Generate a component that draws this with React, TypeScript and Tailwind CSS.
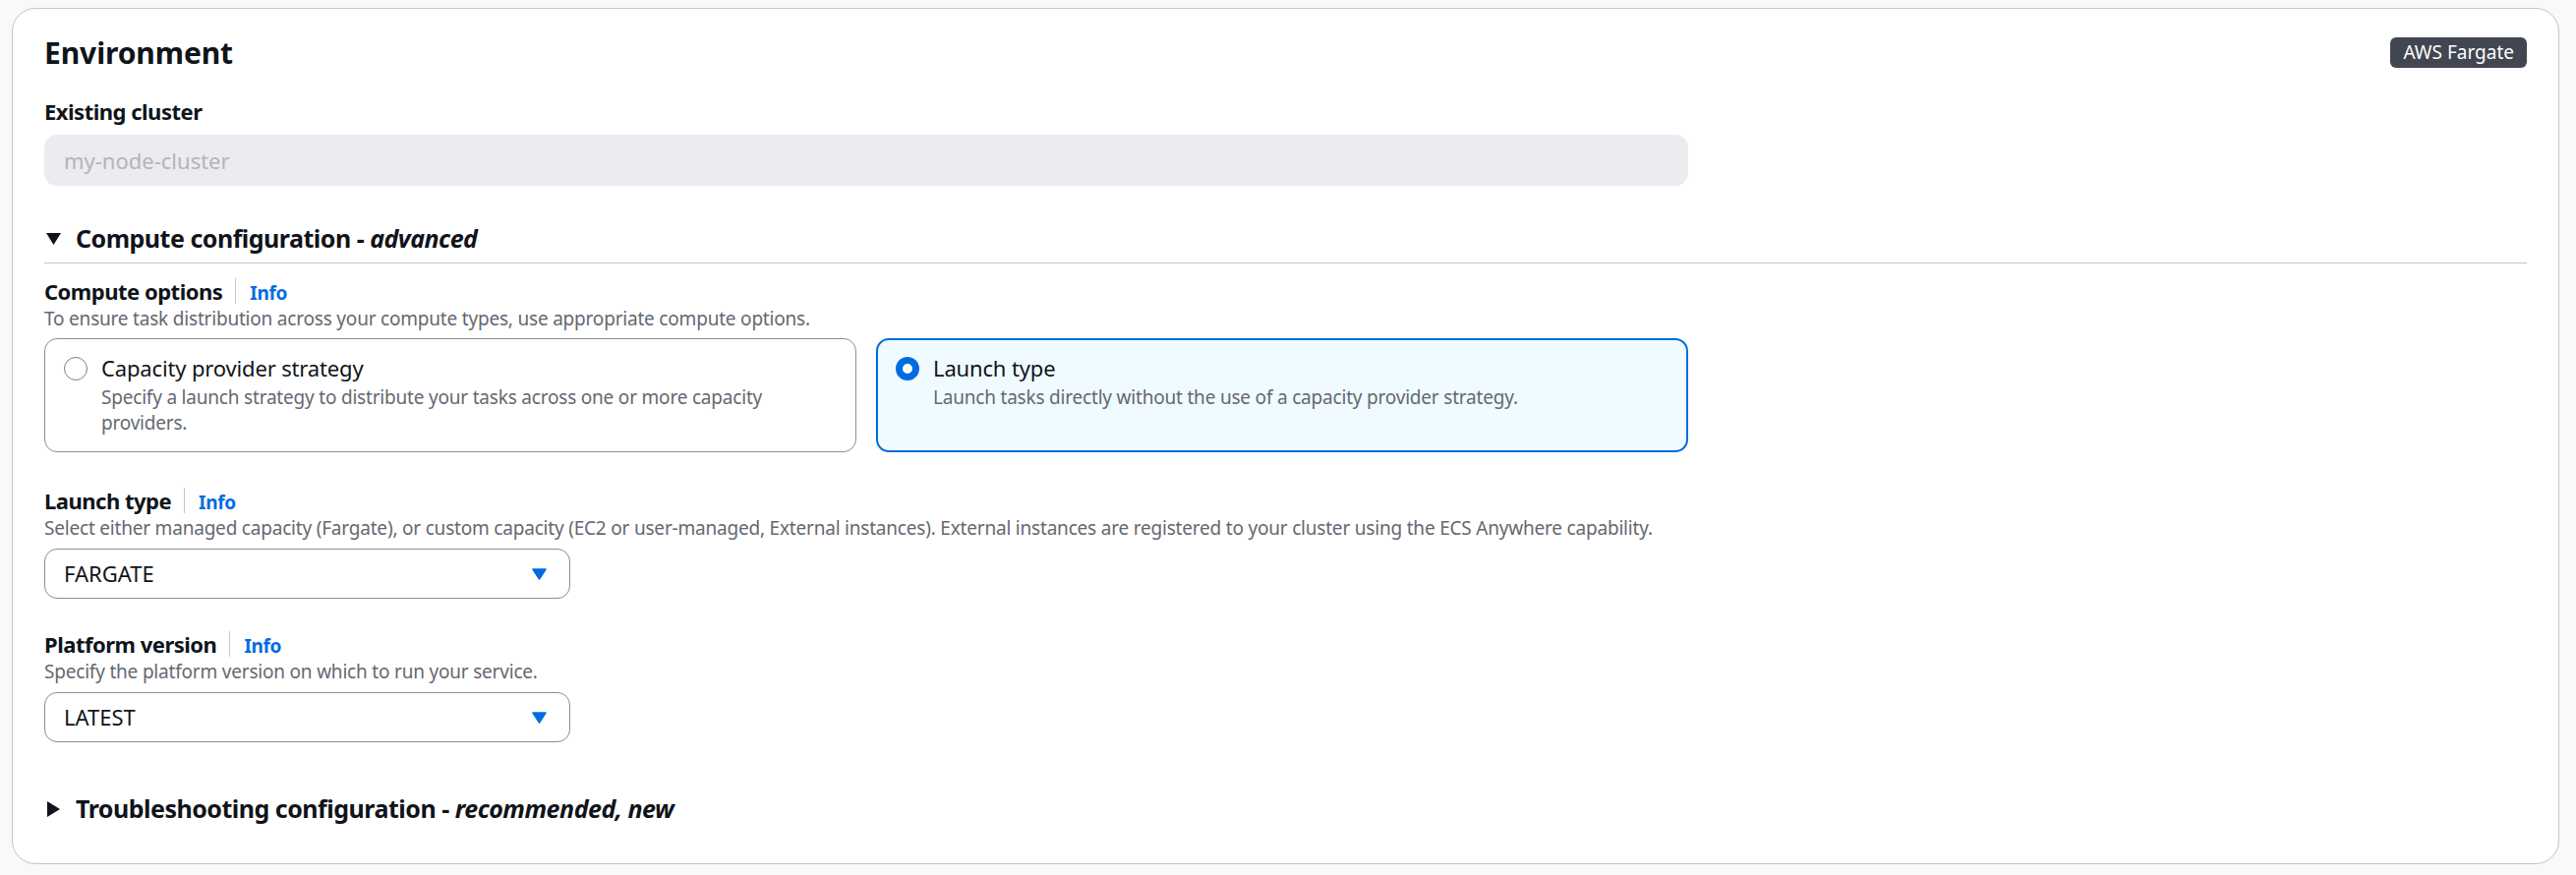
export default function App() {
  const Info = () => (
    <>
      <span className="self-center ml-[13px] h-[26px] w-px bg-[#c6c6cd]" />
      <span className="ml-[14px] text-[19px] tracking-[-0.3px] font-bold text-[#006ce0]">Info</span>
    </>
  );
  const Arrow = () => (
    <svg width="15" height="12" viewBox="0 0 15 12">
      <path d="M1 1 L14 1 L7.5 11 Z" fill="#006ce0" stroke="#006ce0" strokeWidth="1.5" strokeLinejoin="round" />
    </svg>
  );
  const label = "text-[22px] tracking-[-0.5px] font-bold";
  const desc = "text-[19px] tracking-[-0.2px] leading-[27px] text-[#656871]";
  return (
    <div className="min-h-[890px] bg-[#f9f9fa] pt-[8px] pl-[12px] font-['Noto_Sans',sans-serif] text-[#0f141a]">
      <div className="w-[2591px] h-[871px] box-border rounded-[24px] border border-[#c6c6cd] bg-white px-[32px] pt-[27px]">
        <div className="flex justify-between items-start">
          <h2 className="text-[30px] leading-[36px] font-bold tracking-[-0.1px]">Environment</h2>
          <span className="mt-[2px] h-[31px] px-[13px] rounded-[6px] bg-[#424650] text-white text-[19px] leading-[31px]">
            AWS Fargate
          </span>
        </div>

        <div className={`mt-[25px] leading-[33px] ${label}`}>Existing cluster</div>
        <div className="mt-[7px] w-[1672px] h-[52px] rounded-[13px] bg-[#ebebf0] flex items-center px-[20px] text-[22px] leading-[33px] text-[#b4b4bb]">
          my-node-cluster
        </div>

        <div className="mt-[37px] pb-[8px] border-b border-[#c6c6cd]">
          <div className="flex items-center h-[33px]">
            <svg width="15" height="12" viewBox="0 0 15 12" className="ml-[2px] mr-[15px]">
              <path d="M0 0 L15 0 L7.5 12 Z" fill="#0f141a" />
            </svg>
            <span className="text-[25px] tracking-[-0.5px] font-bold leading-[33px]">
              Compute configuration - <i>advanced</i>
            </span>
          </div>
        </div>

        <div className="mt-[13px] flex items-baseline h-[30px] leading-[30px]">
          <span className={label}>Compute options</span>
          <Info />
        </div>
        <div className={desc}>
          To ensure task distribution across your compute types, use appropriate compute options.
        </div>

        <div className="mt-[6px] w-[1672px] grid grid-cols-2 gap-[20px]">
          <div className="h-[116px] box-border rounded-[13px] border border-[#8c8c94] pl-[19px] pt-[13px] pr-[20px] flex gap-[14px]">
            <div className="h-[33px] flex items-center shrink-0">
              <span className="w-[24px] h-[24px] rounded-full border-[1.5px] border-[#7d7d85] bg-white box-border" />
            </div>
            <div>
              <div className="text-[22px] tracking-[-0.15px] leading-[33px]">Capacity provider strategy</div>
              <div className="text-[19px] tracking-[-0.2px] leading-[26px] text-[#656871]">
                Specify a launch strategy to distribute your tasks across one or more capacity providers.
              </div>
            </div>
          </div>
          <div className="h-[116px] box-border rounded-[13px] border-2 border-[#006ce0] bg-[#f0fbff] pl-[18px] pt-[12px] pr-[20px] flex gap-[14px]">
            <div className="h-[33px] flex items-center shrink-0">
              <span className="w-[24px] h-[24px] rounded-full border-[7px] border-[#006ce0] bg-white box-border" />
            </div>
            <div>
              <div className="text-[22px] tracking-[-0.15px] leading-[33px]">Launch type</div>
              <div className="text-[19px] tracking-[-0.2px] leading-[26px] text-[#656871]">
                Launch tasks directly without the use of a capacity provider strategy.
              </div>
            </div>
          </div>
        </div>

        <div className="mt-[34px] flex items-baseline h-[30px] leading-[30px]">
          <span className={label}>Launch type</span>
          <Info />
        </div>
        <div className={desc}>
          Select either managed capacity (Fargate), or custom capacity (EC2 or user-managed, External instances). External instances are registered to your cluster using the ECS Anywhere capability.
        </div>
        <div className="mt-[7px] w-[535px] h-[51px] box-border rounded-[13px] border border-[#8c8c94] pl-[19px] pr-[23px] flex items-center justify-between">
          <span className="text-[22px] leading-[33px]">FARGATE</span>
          <Arrow />
        </div>

        <div className="mt-[31px] flex items-baseline h-[30px] leading-[30px]">
          <span className={label}>Platform version</span>
          <Info />
        </div>
        <div className={desc}>Specify the platform version on which to run your service.</div>
        <div className="mt-[7px] w-[535px] h-[51px] box-border rounded-[13px] border border-[#8c8c94] pl-[19px] pr-[23px] flex items-center justify-between">
          <span className="text-[22px] leading-[33px]">LATEST</span>
          <Arrow />
        </div>

        <div className="mt-[51px] flex items-center h-[33px]">
          <svg width="13" height="16" viewBox="0 0 13 16" className="ml-[3px] mr-[16px]">
            <path d="M0 0 L13 8 L0 16 Z" fill="#0f141a" />
          </svg>
          <span className="text-[25px] tracking-[-0.5px] font-bold leading-[33px]">
            Troubleshooting configuration - <i>recommended, new</i>
          </span>
        </div>
      </div>
    </div>
  );
}
